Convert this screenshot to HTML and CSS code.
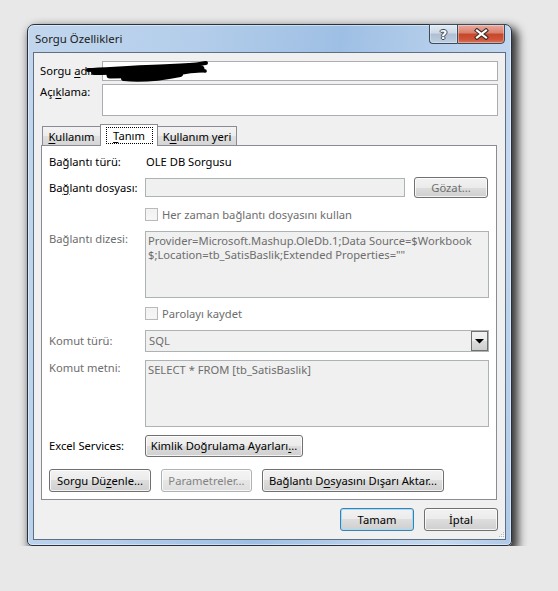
FILE: index.html
```html
<!DOCTYPE html>
<html lang="tr">
<head>
    <meta charset="UTF-8">
    <meta name="viewport" content="width=device-width, initial-scale=1.0">
    <title>Sorgu Özellikleri</title>
    <link rel="stylesheet" href="styles.css">
</head>
<body>
    <div class="window">
        <div class="titlebar">
            <span class="title">Sorgu Özellikleri</span>
            <div class="caption-buttons">
                <div class="cap-btn help"><span>?</span></div>
                <div class="cap-btn close">
                    <svg width="15" height="12" viewBox="0 0 15 12">
                        <path d="M3 2.5 L12 9.5 M12 2.5 L3 9.5" stroke="#3b2a28" stroke-width="4.2" stroke-linecap="square" fill="none"/>
                        <path d="M3 2.5 L12 9.5 M12 2.5 L3 9.5" stroke="#fff" stroke-width="2.2" stroke-linecap="square" fill="none"/>
                    </svg>
                </div>
            </div>
        </div>

        <div class="client">
            <div class="field-row name-row">
                <label>Sorgu <u>a</u>dı:</label>
                <div class="textbox"></div>
                <!-- marker scribble over the query name -->
                <svg class="scribble" width="132" height="24" viewBox="0 0 132 24">
                    <g stroke="#000" fill="none" stroke-linecap="round">
                        <path d="M8 10 C30 9, 60 7, 90 6 S118 4, 126 3" stroke-width="4"/>
                        <path d="M14 12 C40 12, 70 10, 112 7" stroke-width="6"/>
                        <path d="M30 15 C50 15, 75 14, 95 12 C105 11, 112 9, 121 9" stroke-width="7"/>
                        <path d="M44 18 C60 20, 80 18, 100 14" stroke-width="6"/>
                        <path d="M104 8 L125 11" stroke-width="3.5"/>
                    </g>
                </svg>
            </div>
            <div class="field-row desc-row">
                <label>Açı<u>k</u>lama:</label>
                <div class="textbox"></div>
            </div>

            <div class="tabs">
                <div class="tab tab-usage"><u>K</u>ullanım</div>
                <div class="tab tab-def active"><span class="focus"><u>T</u>anım</span></div>
                <div class="tab tab-where">K<u>u</u>llanım yeri</div>
            </div>

            <div class="tab-page">
                <div class="prop-row r1">
                    <span class="lbl">Bağlantı türü:</span>
                    <span class="value">OLE DB Sorgusu</span>
                </div>
                <div class="prop-row r2">
                    <span class="lbl">Ba<u>ğ</u>lantı dosyası:</span>
                    <div class="field file-field"></div>
                    <div class="btn browse">Gözat...</div>
                </div>
                <div class="prop-row r3">
                    <span class="check"></span>
                    <span class="check-text">Her zaman bağlantı dosyasını kullan</span>
                </div>
                <div class="prop-row r4 top">
                    <span class="lbl disabled">Bağlantı dizesi:</span>
                    <div class="field memo">Provider=Microsoft.Mashup.OleDb.1;Data Source=$Workbook<br>$;Location=tb_SatisBaslik;Extended Properties=""</div>
                </div>
                <div class="prop-row r5">
                    <span class="check"></span>
                    <span class="check-text">Parolayı kaydet</span>
                </div>
                <div class="prop-row r6">
                    <span class="lbl disabled">Komut türü:</span>
                    <div class="field combo">
                        <span>SQL</span>
                        <span class="drop">
                            <svg width="9" height="6" viewBox="0 0 9 6"><path d="M0 1 H9 L4.5 5.5 Z" fill="#000"/></svg>
                        </span>
                    </div>
                </div>
                <div class="prop-row r7 top">
                    <span class="lbl disabled">Komut metni:</span>
                    <div class="field memo">SELECT * FROM [tb_SatisBaslik]</div>
                </div>
                <div class="prop-row r8">
                    <span class="lbl">Excel Services:</span>
                    <div class="btn auth">Kimlik Doğrulama Ayarları<u>.</u>..</div>
                </div>
                <div class="prop-row r9">
                    <div class="btn edit">Sorgu Dü<u>z</u>enle...</div>
                    <div class="btn params off">Parametreler...</div>
                    <div class="btn export">Bağlantı D<u>o</u>syasını Dışarı Aktar...</div>
                </div>
            </div>

            <div class="dialog-buttons">
                <div class="btn default">Tamam</div>
                <div class="btn">İptal</div>
            </div>

            <svg class="grip" width="8" height="8" viewBox="0 0 8 8">
                <g fill="#b9b9b9">
                    <rect x="6" y="1" width="1" height="1"/>
                    <rect x="4" y="3" width="1" height="1"/>
                    <rect x="6" y="3" width="1" height="1"/>
                    <rect x="2" y="5" width="1" height="1"/>
                    <rect x="4" y="5" width="1" height="1"/>
                    <rect x="6" y="5" width="1" height="1"/>
                </g>
                <g fill="#fff">
                    <rect x="7" y="2" width="1" height="1"/>
                    <rect x="5" y="4" width="1" height="1"/>
                    <rect x="7" y="4" width="1" height="1"/>
                    <rect x="3" y="6" width="1" height="1"/>
                    <rect x="5" y="6" width="1" height="1"/>
                    <rect x="7" y="6" width="1" height="1"/>
                </g>
            </svg>
        </div>
    </div>
</body>
</html>
```

FILE: styles.css
```css
* {
    box-sizing: border-box;
}
body {
    margin: 0;
    padding: 24px 0 0 27px;
    background-color: #e8e8e8;
    font-family: "Noto Sans", sans-serif;
    font-size: 11.2px;
    line-height: 16px;
    color: #000;
}
u {
    text-underline-offset: 2px;
}

/* window frame */
.window {
    width: 485px;
    height: 522px;
    border: 1px solid #27313f;
    border-radius: 7px 7px 5px 5px;
    padding: 0 5px 5px;
    display: flex;
    flex-direction: column;
    background: linear-gradient(100deg, #c2d7ee 0%, #b3cdea 30%, #9ebfe4 55%, #b9d1ec 75%, #c4d9ef 88%, #afc9e8 100%);
    box-shadow: 4px 5px 10px 2px rgba(0,0,0,0.78), inset 0 0 0 1px rgba(255,255,255,0.45);
}
.titlebar {
    height: 27px;
    display: flex;
    align-items: flex-start;
    padding-left: 2px;
}
.title {
    margin-top: 6px;
    font-size: 11.4px;
    color: #1b1b1b;
}
.caption-buttons {
    display: flex;
    margin: -1px 1px 0 auto;
}
.cap-btn {
    height: 20px;
    border: 1px solid #3b4b5e;
    display: flex;
    align-items: center;
    justify-content: center;
    box-shadow: inset 0 0 0 1px rgba(255,255,255,0.35);
}
.help {
    width: 28px;
    border-right: none;
    border-radius: 0 0 0 4px;
    background: linear-gradient(#e2eaf3, #cdd9e7 45%, #aebfd4 50%, #bfcfe1);
}
.help span {
    font-family: "DejaVu Sans", sans-serif;
    font-weight: bold;
    font-size: 13px;
    line-height: 13px;
    color: #fff;
    text-shadow: 1px 0 #3c4656, -1px 0 #3c4656, 0 1px #3c4656, 0 -1px #3c4656;
}
.close {
    width: 48px;
    border-radius: 0 0 4px 0;
    background: linear-gradient(#eaaa9d, #da7e6c 45%, #c5472b 50%, #cf5439 80%, #dc7559);
}

/* client area */
.client {
    flex: 1;
    position: relative;
    background-color: #f0f0f0;
    border: 1px solid #5f6f83;
    padding: 8px 7px 7px 6px;
    display: flex;
    flex-direction: column;
}
.field-row {
    display: flex;
    position: relative;
}
.field-row label {
    width: 62px;
    flex: none;
}
.textbox {
    flex: 1;
    background-color: #fff;
    border: 1px solid #abadb3;
}
.name-row {
    height: 20px;
    align-items: center;
}
.name-row .textbox {
    height: 20px;
}
.desc-row {
    height: 32px;
    margin-top: 3px;
}
.scribble {
    position: absolute;
    left: 40px;
    top: -1px;
}

/* tabs */
.tabs {
    height: 21px;
    margin: 8px 1px 0;
    padding-left: 1px;
    display: flex;
    align-items: flex-end;
    position: relative;
    z-index: 1;
}
.tab {
    height: 19px;
    border: 1px solid #898c95;
    border-bottom: none;
    padding-top: 1px;
    line-height: 17px;
    text-align: center;
    background: linear-gradient(#f3f3f3, #ececec 50%, #e0e0e0 50%, #d5d5d5);
}
.tab-usage {
    width: 59px;
}
.tab-def {
    width: 58px;
    margin-left: -1px;
}
.tab-where {
    width: 80px;
    margin-left: -1px;
}
.tab.active {
    height: 22px;
    margin-bottom: -1px;
    padding-top: 2px;
    background: #fff;
    position: relative;
    z-index: 2;
}
.focus {
    display: inline-block;
    width: 47px;
    height: 17px;
    line-height: 15px;
    border: 1px dotted #000;
}
.tab-page {
    height: 355px;
    margin: 0 1px;
    border: 1px solid #898c95;
    background-color: #fff;
    padding: 0 7px;
    display: flex;
    flex-direction: column;
}

/* property rows */
.prop-row {
    display: flex;
    align-items: center;
}
.prop-row.top {
    align-items: flex-start;
}
.lbl {
    width: 96px;
    flex: none;
}
.lbl.disabled,
.check-text {
    color: #6d6d6d;
}
.value {
    padding-left: 1px;
}
.r1 { margin-top: 8px; height: 16px; }
.r2 { margin-top: 7px; height: 21px; }
.r3 { margin-top: 9px; height: 15px; }
.r4 { margin-top: 9px; height: 67px; }
.r5 { margin-top: 8px; height: 15px; }
.r6 { margin-top: 9px; height: 22px; }
.r7 { margin-top: 8px; height: 67px; }
.r8 { margin-top: 8px; height: 22px; }
.r9 { margin-top: 12px; height: 23px; gap: 10px; }

.field {
    border: 1px solid #adb2b5;
    background-color: #f0f0f0;
    color: #6d6d6d;
}
.file-field {
    width: 260px;
    height: 19px;
}
.memo {
    width: 344px;
    height: 67px;
    padding: 2px 2px;
    line-height: 14px;
}
.combo {
    width: 344px;
    height: 22px;
    padding-left: 3px;
    display: flex;
    align-items: center;
}
.drop {
    margin-left: auto;
    width: 17px;
    height: 20px;
    border: 1px solid #707070;
    display: flex;
    align-items: center;
    justify-content: center;
    background: linear-gradient(#f2f2f2, #ebebeb 50%, #dddddd 50%, #cfcfcf);
}
.check {
    width: 13px;
    height: 13px;
    margin-left: 96px;
    border: 1px solid #b9b9b9;
    background: linear-gradient(#f1f1f1, #f7f7f7);
    box-shadow: inset 0 0 0 1px #f4f4f4;
}
.check-text {
    margin-left: 4px;
}

/* push buttons */
.btn {
    height: 22px;
    border: 1px solid #707070;
    border-radius: 3px;
    text-align: center;
    line-height: 20px;
    background: linear-gradient(#f2f2f2, #ebebeb 50%, #dddddd 50%, #cfcfcf);
    box-shadow: inset 0 0 0 1px rgba(255,255,255,0.75);
}
.browse {
    width: 74px;
    height: 21px;
    line-height: 19px;
    margin-left: 9px;
    color: #6d6d6d;
}
.auth {
    width: 158px;
}
.r9 .btn {
    height: 23px;
    line-height: 21px;
}
.edit {
    width: 102px;
}
.params {
    width: 91px;
}
.export {
    width: 182px;
}
.btn.off {
    border-color: #adb2b5;
    color: #838383;
    background: linear-gradient(#f4f4f4, #efefef 50%, #e6e6e6 50%, #dedede);
}
.dialog-buttons {
    margin-top: 8px;
    display: flex;
    justify-content: flex-end;
    gap: 10px;
}
.dialog-buttons .btn {
    width: 74px;
    height: 23px;
    line-height: 21px;
}
.btn.default {
    border-color: #3c7fb1;
    box-shadow: inset 0 0 0 1px #a3dcf6;
}
.grip {
    position: absolute;
    right: 0;
    bottom: 0;
}
```
